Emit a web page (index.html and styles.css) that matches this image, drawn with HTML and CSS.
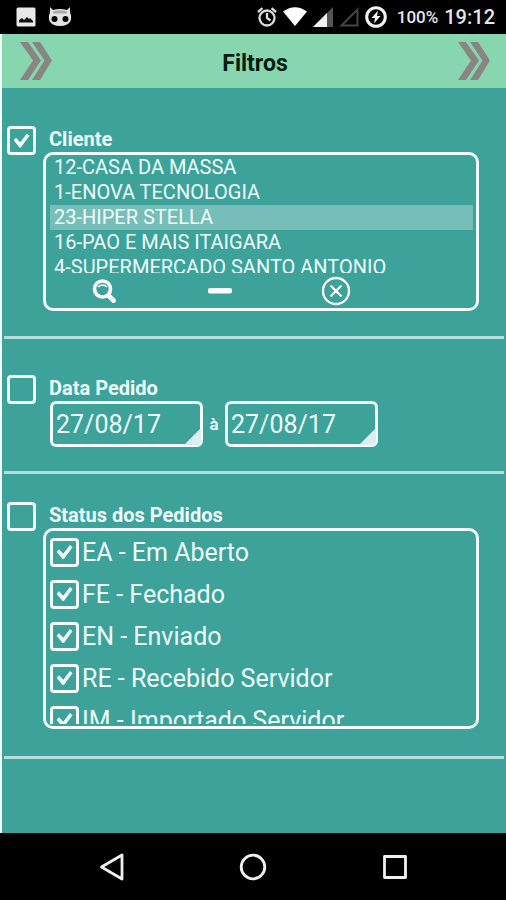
FILE: index.html
```html
<!DOCTYPE html>
<html lang="pt-BR">
<head>
<meta charset="utf-8">
<meta name="viewport" content="width=device-width, initial-scale=1">
<title>Filtros</title>
<link rel="stylesheet" href="styles.css">
</head>
<body>
<div class="statusbar">
  <div class="notifications">
    <svg width="20" height="20" viewBox="0 0 20 20"><rect x=".5" y=".5" width="19" height="19" rx="1.5" fill="#e8e8e8"/><path d="M3 15.500V13l3-2 2 2 3-3 2 2 1-1 3 3v1.500z" fill="#111"/></svg>
    <svg width="24" height="20" viewBox="0 0 24 20"><path d="M2 0l3 3Q12 1 19 3l3-3v5q2 6 .5 9Q20 19 12 19T1.500 14Q0 11 2 5z" fill="#e4e4e4"/><path d="M5 4.500Q12 2 19 4.500v2H5z" fill="#aaa"/><circle cx="6.500" cy="12" r="3"/><circle cx="17.500" cy="12" r="3"/></svg>
  </div>
  <div class="indicators">
    <svg width="20" height="20" viewBox="0 0 20 20" fill="none" stroke="#ddd" stroke-width="2.300"><circle cx="10" cy="11" r="7.500"/><path d="M10 6v5l3.500 2.500M1 5l4.500-3.800M19 5l-4.500-3.800"/></svg>
    <svg width="24" height="20" viewBox="0 0 24 20"><path d="M0 4.500Q12-4 24 4.500L12 19z" fill="#fff"/></svg>
    <svg width="20" height="20" viewBox="0 0 20 20"><path d="M20 0v20H0z" fill="#555"/><path d="M14 6v14H0z" fill="#f2f2f2"/></svg>
    <svg width="20" height="20" viewBox="0 0 20 20"><path d="M18.500 2.500v16h-16z" fill="none" stroke="#444" stroke-width="2"/></svg>
    <svg width="22" height="22" viewBox="0 0 22 22"><circle cx="11" cy="11" r="9.300" fill="none" stroke="#f4f4f4" stroke-width="3"/><path d="M13 4.500L6.500 12H10l-1 5.500L15.500 10H12z" fill="#f4f4f4"/></svg>
    <span class="battery">100%</span>
    <span class="clock">19:12</span>
  </div>
</div>

<main class="panel">
  <header class="titlebar">
    <button class="arrow" type="button" aria-label="Voltar"><svg width="32" height="38" viewBox="0 0 32 38" fill="#898583"><path d="M0 0h8l13 18.500L8 38H0l13-19.500z"/><path d="M12 0h8l12 18.500L20 38h-8l12.500-19.500z"/></svg></button>
    <h1>Filtros</h1>
    <button class="arrow" type="button" aria-label="Avançar"><svg width="32" height="38" viewBox="0 0 32 38" fill="#898583"><path d="M0 0h8l13 18.500L8 38H0l13-19.500z"/><path d="M12 0h8l12 18.500L20 38h-8l12.500-19.500z"/></svg></button>
  </header>

  <section class="filter filter-client">
    <input class="check" type="checkbox" id="client" checked>
    <div class="content">
      <label class="heading" for="client">Cliente</label>
      <div class="box">
        <ul class="clients">
          <li><button type="button">12-CASA DA MASSA</button></li>
          <li><button type="button">1-ENOVA TECNOLOGIA</button></li>
          <li><button class="selected" type="button">23-HIPER STELLA</button></li>
          <li><button type="button">16-PAO E MAIS ITAIGARA</button></li>
          <li><button type="button">4-SUPERMERCADO SANTO ANTONIO</button></li>
        </ul>
        <div class="tools">
          <button type="button" aria-label="Pesquisar"><svg width="24" height="24" viewBox="0 0 24 24" fill="none" stroke="#fff"><circle cx="10.500" cy="10" r="8" stroke-width="3.600"/><path d="M16.500 16.500l5 5" stroke-width="4.800" stroke-linecap="round"/><path d="M6 8Q10.500 4 15 8" stroke-width="1.500"/></svg></button>
          <button type="button" aria-label="Remover"><svg width="24" height="6" viewBox="0 0 24 6"><rect width="24" height="5.500" rx="2" fill="#fff"/></svg></button>
          <button type="button" aria-label="Limpar"><svg width="30" height="30" viewBox="0 0 30 30" fill="none" stroke="#fff" stroke-width="2.300"><circle cx="15" cy="15" r="13"/><path d="M9.500 9.500l11 11M20.500 9.500l-11 11"/></svg></button>
        </div>
      </div>
    </div>
  </section>

  <section class="filter filter-date">
    <input class="check" type="checkbox" id="date">
    <div class="content">
      <label class="heading" for="date">Data Pedido</label>
      <div class="range">
        <div class="date"><input type="text" value="27/08/17" aria-label="Data inicial"></div>
        <span class="to">à</span>
        <div class="date"><input type="text" value="27/08/17" aria-label="Data final"></div>
      </div>
    </div>
  </section>

  <section class="filter filter-status">
    <input class="check" type="checkbox" id="status">
    <div class="content">
      <label class="heading" for="status">Status dos Pedidos</label>
      <div class="box">
        <div class="options">
          <label class="option"><input class="check" type="checkbox" checked>EA - Em Aberto</label>
          <label class="option"><input class="check" type="checkbox" checked>FE - Fechado</label>
          <label class="option"><input class="check" type="checkbox" checked>EN - Enviado</label>
          <label class="option"><input class="check" type="checkbox" checked>RE - Recebido Servidor</label>
          <label class="option"><input class="check" type="checkbox" checked>IM - Importado Servidor</label>
        </div>
      </div>
    </div>
  </section>
</main>

<nav class="navbar">
  <button type="button" aria-label="Voltar"><svg width="28" height="28" viewBox="0 0 28 28" fill="none" stroke="#f0f0f0" stroke-width="2.800" stroke-linejoin="round"><path d="M25 2v24L4.500 14z"/></svg></button>
  <button type="button" aria-label="Início"><svg width="28" height="28" viewBox="0 0 28 28" fill="none" stroke="#f0f0f0" stroke-width="2.800"><circle cx="14" cy="14" r="11.800"/></svg></button>
  <button type="button" aria-label="Recentes"><svg width="28" height="28" viewBox="0 0 28 28" fill="none" stroke="#f0f0f0" stroke-width="2.800" stroke-linejoin="round"><rect x="3.500" y="3.500" width="21" height="21"/></svg></button>
</nav>
</body>
</html>
```
FILE: styles.css
```css
* {
  box-sizing: border-box;
}

body {
  margin: 0;
  min-height: 100vh;
  display: flex;
  flex-direction: column;
  background: #000;
  color: #effffc;
  font-family: Roboto, "Liberation Sans", sans-serif;
}

button {
  margin: 0;
  padding: 0;
  border: 0;
  background: none;
  color: inherit;
  font: inherit;
}

svg {
  display: block;
}

.statusbar {
  height: 34px;
  padding: 0 11px 0 16px;
  display: flex;
  align-items: center;
  justify-content: space-between;
}

.notifications {
  display: flex;
  gap: 12px;
}

.indicators {
  display: flex;
  align-items: center;
  gap: 6px;
  color: #e6e6e6;
  font-weight: 500;
}

.battery {
  margin-left: 4px;
  font-size: 17px;
}

.clock {
  font-size: 20px;
}

.panel {
  flex: 1;
  border-left: 2px solid #f4fffc;
  background: #3ca29a;
}

.titlebar {
  height: 54px;
  padding: 0 16px 0 18px;
  display: flex;
  align-items: center;
  justify-content: space-between;
  background: #88d6b0;
}

.titlebar h1 {
  margin: 6px 0 0;
  color: #001b10;
  font-size: 23px;
  line-height: 30px;
}

.filter {
  margin: 0 2px;
  padding-left: 3px;
  display: flex;
  align-items: flex-start;
  gap: 7px;
  border-bottom: 3px solid #b5deda;
}

.filter-client {
  padding-top: 38px;
  padding-bottom: 25px;
}

.filter-date {
  padding-top: 36px;
  padding-bottom: 24px;
}

.filter-status {
  padding-top: 28px;
  padding-bottom: 27px;
}

.content {
  flex: 1;
  min-width: 0;
}

.heading {
  display: block;
  padding-left: 6px;
  font-size: 20px;
  font-weight: 700;
  line-height: 26px;
}

.box {
  margin-right: 25px;
  border: 3px solid #f4fffd;
  border-radius: 10px;
}

.filter-status .box {
  padding-bottom: 2px;
}

.check {
  appearance: none;
  flex: none;
  width: 29px;
  height: 29px;
  margin: 0;
  display: grid;
  place-items: center;
  border: 3px solid #f4fffd;
  border-radius: 4px;
}

.check:checked::before {
  content: "";
  width: 16px;
  height: 14px;
  background: #f4fffd;
  clip-path: polygon(0 48%, 16% 30%, 42% 62%, 84% 0, 100% 16%, 46% 100%, 38% 100%);
}

.clients {
  height: 118px;
  margin: 0;
  padding: 0 3px 0 4px;
  overflow: hidden;
  list-style: none;
}

.clients button {
  display: block;
  width: 100%;
  padding: 0 4px;
  font-size: 20px;
  line-height: 25px;
  text-align: left;
}

.clients .selected {
  background: #78beb8;
}

.tools {
  height: 35px;
  display: grid;
  grid-template-columns: repeat(3, 27%);
}

.tools button {
  display: grid;
  place-items: center;
}

.range {
  padding-left: 7px;
  display: flex;
  align-items: center;
  gap: 6px;
}

.date {
  position: relative;
  width: 153px;
}

.date input {
  display: block;
  width: 100%;
  height: 46px;
  padding: 0 3px;
  border: 3px solid #f4fffd;
  border-radius: 6px;
  background: none;
  color: inherit;
  font: 25px/40px Roboto, "Liberation Sans", sans-serif;
}

.date::after {
  content: "";
  position: absolute;
  right: 2px;
  bottom: 2px;
  width: 17px;
  height: 17px;
  background: #dceeed;
  clip-path: polygon(100% 0, 100% 100%, 0 100%);
}

.to {
  width: 10px;
  font-size: 17px;
  font-weight: 700;
  text-align: center;
}

.options {
  height: 193px;
  padding: 0 4px;
  overflow: hidden;
}

.option {
  height: 42px;
  display: flex;
  align-items: center;
  gap: 3px;
  font-size: 25px;
}

.navbar {
  height: 67px;
  display: grid;
  grid-template-columns: repeat(3, 28%);
  justify-content: center;
}

.navbar button {
  display: grid;
  place-items: center;
}
```
